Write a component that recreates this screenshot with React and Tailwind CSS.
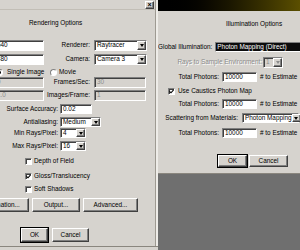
import React from "react";

const sunken =
  "border border-t-[#808080] border-l-[#808080] border-b-white border-r-white shadow-[inset_1px_1px_0_#404040]";
const raised =
  "border border-t-white border-l-white border-b-[#404040] border-r-[#404040] shadow-[inset_-1px_-1px_0_#808080]";

function Field({ w, children, disabled }) {
  return (
    <div
      className={`flex h-full shrink-0 items-center pl-[2px] ${w} ${sunken} ${
        disabled ? "bg-[#d6d3ce] text-[#8c8c8c]" : "bg-white text-black"
      }`}
    >
      {children}
    </div>
  );
}

function Arrow({ disabled }) {
  return (
    <div className={`ml-auto flex h-full w-[9px] shrink-0 items-center justify-center bg-[#d6d3ce] ${raised}`}>
      <div
        className={`border-x-[2.5px] border-t-[3px] border-x-transparent ${
          disabled ? "border-t-[#8c8c8c]" : "border-t-black"
        }`}
      />
    </div>
  );
}

function Select({ w, children, disabled, hilite }) {
  return (
    <div
      className={`flex h-full shrink-0 items-center ${w} ${sunken} ${
        disabled ? "bg-[#d6d3ce] text-[#8c8c8c]" : "bg-white text-black"
      }`}
    >
      {hilite ? (
        <span className="flex h-full flex-1 items-center bg-[#0c0c0c] pl-[1px] text-white whitespace-nowrap">
          {children}
        </span>
      ) : (
        <span className="pl-[2px] whitespace-nowrap">{children}</span>
      )}
      {!hilite && <Arrow disabled={disabled} />}
    </div>
  );
}

function Btn({ w, children, def }) {
  return (
    <div
      className={`flex h-full shrink-0 items-center justify-center bg-[#d6d3ce] whitespace-nowrap ${w} ${raised} ${
        def ? "outline outline-1 outline-black" : ""
      }`}
    >
      {children}
    </div>
  );
}

function Check({ on }) {
  return (
    <div className={`flex h-[7px] w-[7px] shrink-0 items-center justify-center bg-white ${sunken}`}>
      {on && (
        <svg width="5" height="5" viewBox="0 0 5 5">
          <path d="M0.5 2.3 L2 3.8 L4.6 0.8" stroke="black" strokeWidth="1.1" fill="none" />
        </svg>
      )}
    </div>
  );
}

function Radio({ on }) {
  return (
    <div className="flex h-[7px] w-[7px] shrink-0 items-center justify-center rounded-full border border-t-[#808080] border-l-[#808080] border-b-white border-r-white bg-white">
      {on && <div className="h-[3px] w-[3px] rounded-full bg-black" />}
    </div>
  );
}

const dis = "text-[#8c8c8c] [text-shadow:1px_1px_0_#ffffff]";

function RenderingOptions() {
  return (
    <div className="flex h-[247px] w-[158px] shrink-0 border-b border-b-[#8a867e]">
      <div className="flex flex-1 flex-col overflow-hidden">
        <div className="flex h-[10px] items-center justify-end border-b border-b-[#c2beb6] pr-[1px]">
          <div className={`flex h-[8px] w-[9px] items-center justify-center bg-[#d6d3ce] text-[7px] font-bold ${raised}`}>
            ×
          </div>
        </div>
        <div className="mt-[9px] flex h-[8px] items-center pl-[29px]">Rendering Options</div>

        <div className="mt-[13px] flex h-[11px] items-center">
          <div className="ml-[-6px] flex h-full">
            <Field w="w-[50px]">640</Field>
          </div>
          <div className="w-[46px] text-right">Renderer:</div>
          <div className="ml-[4px] h-full">
            <Select w="w-[53px]">Raytracer</Select>
          </div>
        </div>
        <div className="mt-[3px] flex h-[11px] items-center">
          <div className="ml-[-6px] flex h-full">
            <Field w="w-[50px]">480</Field>
          </div>
          <div className="w-[46px] text-right">Camera:</div>
          <div className="ml-[4px] h-full">
            <Select w="w-[53px]">Camera 3</Select>
          </div>
        </div>

        <div className="mt-[2px] flex h-[10px] items-center">
          <div className="ml-[-4px] flex w-[54px] shrink-0 items-center">
            <Radio on />
            <span className="ml-[4px]">Single Image</span>
          </div>
          <Radio />
          <span className="ml-[2px]">Movie</span>
        </div>

        <div className="flex h-[11px] items-center">
          <div className="ml-[-6px] flex h-full">
            <Field w="w-[50px]" disabled>
              0
            </Field>
          </div>
          <div className="w-[46px] text-right">Frames/Sec:</div>
          <div className="ml-[4px] h-full">
            <Field w="w-[52px]" disabled>
              30
            </Field>
          </div>
        </div>
        <div className="mt-[2px] flex h-[11px] items-center">
          <div className="ml-[-6px] flex h-full">
            <Field w="w-[50px]" disabled>
              1.0
            </Field>
          </div>
          <div className="w-[46px] text-right whitespace-nowrap">Images/Frame:</div>
          <div className="ml-[4px] h-full">
            <Field w="w-[52px]" disabled>
              1
            </Field>
          </div>
        </div>

        <div className="mt-[3px] flex h-[10px] items-center">
          <div className="w-[58px] text-right whitespace-nowrap">Surface Accuracy:</div>
          <div className="ml-[2px] h-full">
            <Field w="w-[32px]">0.02</Field>
          </div>
        </div>
        <div className="mt-[3px] flex h-[10px] items-center">
          <div className="w-[58px] text-right">Antialiasing:</div>
          <div className="ml-[2px] h-full">
            <Select w="w-[41px]">Medium</Select>
          </div>
        </div>
        <div className="mt-[1px] flex h-[10px] items-center">
          <div className="w-[58px] text-right whitespace-nowrap">Min Rays/Pixel:</div>
          <div className="ml-[2px] h-full">
            <Select w="w-[26px]">4</Select>
          </div>
        </div>
        <div className="mt-[3px] flex h-[10px] items-center">
          <div className="w-[58px] text-right whitespace-nowrap">Max Rays/Pixel:</div>
          <div className="ml-[2px] h-full">
            <Select w="w-[26px]">16</Select>
          </div>
        </div>

        <div className="mt-[6px] flex h-[8px] items-center pl-[25px]">
          <Check />
          <span className="ml-[2px]">Depth of Field</span>
        </div>
        <div className="mt-[7px] flex h-[8px] items-center pl-[25px]">
          <Check on />
          <span className="ml-[2px]">Gloss/Translucency</span>
        </div>
        <div className="mt-[5px] flex h-[8px] items-center pl-[25px]">
          <Check />
          <span className="ml-[2px]">Soft Shadows</span>
        </div>

        <div className="mt-[5px] flex h-[14px] items-center gap-[3px]">
          <div className="ml-[-27px] h-full">
            <Btn w="w-[56px]">Illumination...</Btn>
          </div>
          <Btn w="w-[48px]">Output...</Btn>
          <Btn w="w-[55px]">Advanced...</Btn>
        </div>

        <div className="mt-[16px] flex h-[14px] items-center gap-[4px] pl-[21px]">
          <Btn w="w-[27px]" def>
            OK
          </Btn>
          <Btn w="w-[37px]">Cancel</Btn>
        </div>
      </div>
      <div className="w-[1px] bg-[#9e9a92]" />
      <div className="w-[2px] bg-[#eeece8]" />
    </div>
  );
}

function TotalRow({ mt }) {
  return (
    <div className={`flex h-[10px] items-center ${mt}`}>
      <div className="w-[61px] text-right whitespace-nowrap">Total Photons:</div>
      <div className="ml-[3px] h-full">
        <Field w="w-[35px]">10000</Field>
      </div>
      <span className="ml-[3px] whitespace-nowrap"># to Estimate</span>
    </div>
  );
}

function IlluminationOptions() {
  return (
    <div className="flex min-w-0 flex-1 flex-col">
      <div className="flex h-[174px] flex-col overflow-hidden border-b border-b-[#8a867e]">
        <div className="h-[11px] shrink-0 bg-gradient-to-r from-[#000000] via-[#1a1600] to-[#5b4f00]" />
        <div className="mt-[9px] flex h-[8px] items-center pl-[68px] whitespace-nowrap">Illumination Options</div>

        <div className="mt-[14px] flex h-[10px] items-center">
          <div className="w-[61px] text-right whitespace-nowrap">Global Illumination:</div>
          <div className="ml-[3px] h-full">
            <Select w="w-[90px]" hilite>
              Photon Mapping (Direct)
            </Select>
          </div>
        </div>

        <div className="mt-[5px] flex h-[11px] items-center">
          <div className={`w-[104px] text-right whitespace-nowrap ${dis}`}>Rays to Sample Environment:</div>
          <div className="ml-[1px] h-full">
            <Select w="w-[20px]" disabled>
              1
            </Select>
          </div>
        </div>

        <TotalRow mt="mt-[4px]" />

        <div className="mt-[5px] flex h-[8px] items-center pl-[10px]">
          <Check on />
          <span className="ml-[3px] whitespace-nowrap">Use Caustics Photon Map</span>
        </div>

        <TotalRow mt="mt-[4px]" />

        <div className="mt-[4px] flex h-[10px] items-center">
          <div className="w-[80px] text-right whitespace-nowrap">Scattering from Materials:</div>
          <div className="ml-[4px] h-full">
            <Select w="w-[57px]">Photon Mapping</Select>
          </div>
        </div>

        <TotalRow mt="mt-[5px]" />

        <div className="mt-[17px] flex h-[12px] items-center gap-[2px] pl-[60px]">
          <Btn w="w-[29px]" def>
            OK
          </Btn>
          <Btn w="w-[39px]">Cancel</Btn>
        </div>
      </div>
      <div className="flex-1 bg-[#6f6f6f]" />
    </div>
  );
}

export default function App() {
  return (
    <div className="flex h-[250px] w-[300px] overflow-hidden bg-[#d6d3ce] font-['Liberation_Sans',Arial,sans-serif] text-[6.4px] leading-none text-black">
      <RenderingOptions />
      <IlluminationOptions />
    </div>
  );
}
